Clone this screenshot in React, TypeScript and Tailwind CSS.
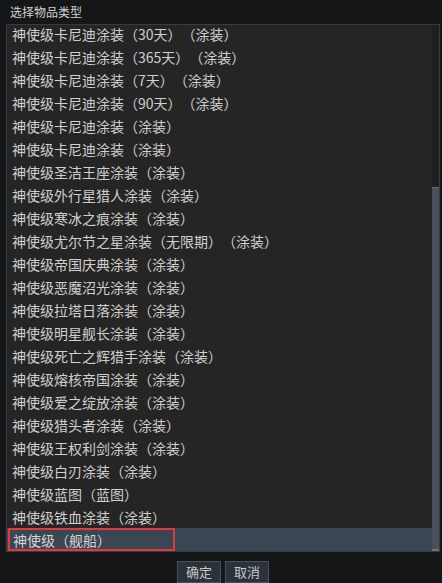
const ITEMS = [
  "神使级卡尼迪涂装（30天）（涂装）",
  "神使级卡尼迪涂装（365天）（涂装）",
  "神使级卡尼迪涂装（7天）（涂装）",
  "神使级卡尼迪涂装（90天）（涂装）",
  "神使级卡尼迪涂装（涂装）",
  "神使级卡尼迪涂装（涂装）",
  "神使级圣洁王座涂装（涂装）",
  "神使级外行星猎人涂装（涂装）",
  "神使级寒冰之痕涂装（涂装）",
  "神使级尤尔节之星涂装（无限期）（涂装）",
  "神使级帝国庆典涂装（涂装）",
  "神使级恶魔沼光涂装（涂装）",
  "神使级拉塔日落涂装（涂装）",
  "神使级明星舰长涂装（涂装）",
  "神使级死亡之辉猎手涂装（涂装）",
  "神使级熔核帝国涂装（涂装）",
  "神使级爱之绽放涂装（涂装）",
  "神使级猎头者涂装（涂装）",
  "神使级王权利剑涂装（涂装）",
  "神使级白刃涂装（涂装）",
  "神使级蓝图（蓝图）",
  "神使级铁血涂装（涂装）",
  "神使级（舰船）",
];

export default function App() {
  const selected = ITEMS.length - 1;

  return (
    <div
      className="w-[442px] h-[583px] bg-[#151617] flex flex-col overflow-hidden [text-spacing-trim:space-all]"
      style={{ fontFamily: '"Noto Sans CJK SC", "Noto Sans", sans-serif' }}
    >
      <div className="h-[24px] flex items-center pl-[10px] text-[12px] text-[#d2d2d2]">
        选择物品类型
      </div>

      <div className="ml-[6px] mr-[2px] h-[528px] border border-[#3a3b3c] bg-[#252525] flex overflow-hidden">
        <ul className="flex-1 flex flex-col overflow-hidden">
          {ITEMS.map((item, i) => (
            <li
              key={`item-${i}`}
              className={
                i === 0
                  ? "h-[20px] pb-[3px] flex items-center shrink-0"
                  : i === selected
                    ? "h-[23px] flex items-center shrink-0 bg-[#3a4653]"
                    : "h-[23px] flex items-center shrink-0"
              }
            >
              <span
                className={
                  i === selected
                    ? "h-[23px] w-[167px] ml-px border-2 border-[#e23a3b] flex items-center pl-[3px] text-[14px] leading-none text-[#d6d6d6]"
                    : "pl-[5px] text-[14px] leading-none text-[#d0d0d0] whitespace-nowrap"
                }
              >
                {item}
              </span>
            </li>
          ))}
        </ul>
        <div className="w-[7px] bg-[#1e1f20] flex flex-col">
          <div className="h-[162px]" />
          <div className="flex-1 bg-[#48515b] border-t border-[#5f6a75] border-b-2 border-b-[#6b7580]" />
        </div>
      </div>

      <div className="flex justify-center gap-[4px] mt-[9px] pl-[4px]">
        <button className="w-[44px] h-[22px] bg-[#2a323a] border border-[#46515b] text-[13px] text-[#c8c8c8] flex items-center justify-center">
          确定
        </button>
        <button className="w-[44px] h-[22px] bg-[#2a323a] border border-[#46515b] text-[13px] text-[#c8c8c8] flex items-center justify-center">
          取消
        </button>
      </div>
    </div>
  );
}
